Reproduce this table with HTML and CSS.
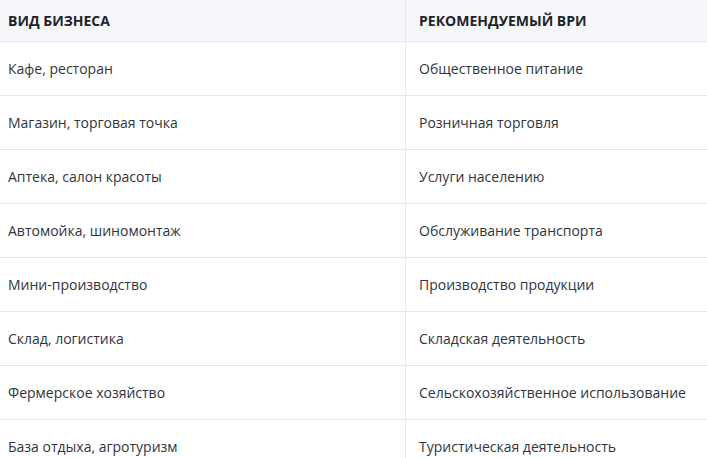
FILE: index.html
```html
<!DOCTYPE html>
<html lang="ru">
<head>
<meta charset="utf-8">
<link rel="stylesheet" href="styles.css">
</head>
<body>
<table class="vri">
  <thead>
    <tr><th>Вид бизнеса</th><th>Рекомендуемый ВРИ</th></tr>
  </thead>
  <tbody>
    <tr><td>Кафе, ресторан</td><td>Общественное питание</td></tr>
    <tr><td>Магазин, торговая точка</td><td>Розничная торговля</td></tr>
    <tr><td>Аптека, салон красоты</td><td>Услуги населению</td></tr>
    <tr><td>Автомойка, шиномонтаж</td><td>Обслуживание транспорта</td></tr>
    <tr><td>Мини-производство</td><td>Производство продукции</td></tr>
    <tr><td>Склад, логистика</td><td>Складская деятельность</td></tr>
    <tr><td>Фермерское хозяйство</td><td>Сельскохозяйственное использование</td></tr>
    <tr><td>База отдыха, агротуризм</td><td>Туристическая деятельность</td></tr>
  </tbody>
</table>
</body>
</html>
```

FILE: styles.css
```css
html, body {
  margin: 0;
  padding: 0;
  background: #ffffff;
}
body {
  font-family: "Open Sans", "Noto Sans", sans-serif;
  font-size: 14px;
  color: #30353d;
}
.vri {
  width: 707px;
  border-collapse: collapse;
  table-layout: fixed;
}
.vri th, .vri td {
  text-align: left;
  padding: 0 13px;
  border-bottom: 1px solid #e7e9ee;
  border-left: 1px solid #e7e9ee;
  white-space: nowrap;
}
.vri th:first-child, .vri td:first-child {
  width: 384px;
  padding-left: 8px;
  border-left: none;
}
.vri th {
  height: 41px;
  background: #f5f7fa;
  font-weight: 700;
  text-transform: uppercase;
  color: #1f2329;
}
.vri td {
  height: 53px;
}
```
